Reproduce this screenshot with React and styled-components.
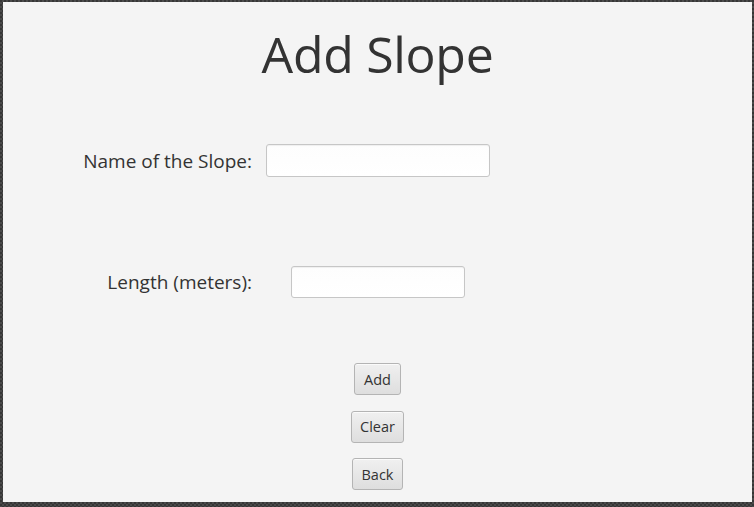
import React from 'react';
import styled, { createGlobalStyle } from 'styled-components';

const GlobalStyle = createGlobalStyle`
  html, body {
    margin: 0;
    padding: 0;
  }
  body {
    width: 754px;
    height: 507px;
    overflow: hidden;
    background-color: #3d3d3d;
    background-image: repeating-conic-gradient(#4a4a4a 0 25%, #363636 0 50%);
    background-size: 4px 4px;
    font-family: "Open Sans", "Noto Sans", sans-serif;
  }
`;

const Frame = styled.div`
  box-sizing: border-box;
  width: 754px;
  height: 507px;
  padding: 2px 2px 5px 3px;
`;

const Pane = styled.div`
  box-sizing: border-box;
  height: 100%;
  background: #f4f4f4;
  display: flex;
  flex-direction: column;
  align-items: center;
  color: #333333;
`;

const Title = styled.h1`
  margin: 17px 0 0;
  font-weight: 400;
  font-size: 50px;
  line-height: 70px;
  letter-spacing: -0.3px;
`;

const Form = styled.div`
  align-self: stretch;
  display: grid;
  grid-template-columns: 249px 224px;
  column-gap: 14px;
  grid-auto-rows: 33px;
  row-gap: 88px;
  margin-top: 55px;
`;

const Label = styled.label`
  justify-self: end;
  align-self: center;
  font-size: 19px;
`;

const Field = styled.input`
  justify-self: center;
  align-self: center;
  box-sizing: border-box;
  width: ${props => props.w}px;
  height: ${props => props.h}px;
  border: 1px solid #c6c6c6;
  border-radius: 3px;
  background: linear-gradient(#fdfdfd, #ffffff);
  box-shadow: inset 0 1px 1px rgba(0, 0, 0, 0.06);
  outline: none;
  font-family: inherit;
  font-size: 14px;
  padding: 0 7px;
`;

const Buttons = styled.div`
  display: flex;
  flex-direction: column;
  align-items: center;
  gap: 15.5px;
  margin-top: 65px;
`;

const Button = styled.button`
  box-sizing: border-box;
  height: 32px;
  padding: 0 ${props => props.px}px;
  border: 1px solid #b4b4b4;
  border-radius: 3px;
  background: linear-gradient(#f0f0f0, #dedede);
  box-shadow: inset 0 1px 0 rgba(255, 255, 255, 0.7);
  color: #333333;
  font-family: inherit;
  font-size: 14.5px;
  cursor: pointer;
`;

export default function App() {
  return (
    <>
      <GlobalStyle />
      <Frame>
        <Pane>
          <Title>Add Slope</Title>
          <Form>
            <Label>Name of the Slope:</Label>
            <Field w={224} h={33} />
            <Label>Length (meters):</Label>
            <Field w={174} h={32} />
          </Form>
          <Buttons>
            <Button px={9.5}>Add</Button>
            <Button px={8.5}>Clear</Button>
            <Button px={8.5}>Back</Button>
          </Buttons>
        </Pane>
      </Frame>
    </>
  );
}
